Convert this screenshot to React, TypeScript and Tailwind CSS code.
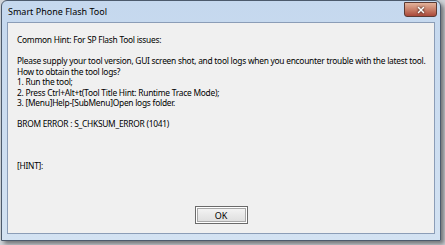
import { X } from "lucide-react";

const lines = [
  "Common Hint: For SP Flash Tool issues:",
  "",
  "Please supply your tool version, GUI screen shot, and tool logs when you encounter trouble with the latest tool.",
  "How to obtain the tool logs?",
  "1. Run the tool;",
  "2. Press Ctrl+Alt+t(Tool Title Hint: Runtime Trace Mode);",
  "3. [Menu]Help-[SubMenu]Open logs folder.",
  "",
  "BROM ERROR : S_CHKSUM_ERROR (1041)",
  "",
  "",
  "",
  "[HINT]:",
];

export default function App() {
  return (
    <div className="w-[445px] h-[245px] bg-[#cfd3d8] overflow-hidden font-['Noto_Sans','Open_Sans',sans-serif]">
      {/* WINDOW */}
      <div className="ml-px w-[440px] h-[241px] flex flex-col rounded-t-[6px] border border-[#4c5a6c] bg-gradient-to-b from-[#c5d8ee] to-[#d3e2f2] shadow-[3px_3px_4px_rgba(0,0,0,0.45)]">
        {/* TITLE BAR */}
        <div className="h-[21px] flex items-start justify-between pl-[6px] pr-[3px]">
          <span className="mt-[5px] text-[9px] leading-[11px] text-black">Smart Phone Flash Tool</span>
          <button className="mt-px w-[33px] h-[15px] flex items-center justify-center rounded-b-[3px] border border-[#5b3a33] bg-gradient-to-b from-[#e3b39b] via-[#c9806a] to-[#a9483a]">
            <X size={10} strokeWidth={3.5} className="text-white drop-shadow-[0_0_1px_rgba(0,0,0,0.9)]" />
          </button>
        </div>

        {/* CLIENT */}
        <div className="flex-1 mx-[5px] mb-[6px] border border-[#8b9db7] bg-[#f0f0f0] flex flex-col">
          <div className="pl-[9px] pt-[12px] text-[8.4px] leading-[10.5px] tracking-[-0.25px] text-black">
            {lines.map((l, i) => (
              <div key={i} className="h-[10.5px] whitespace-nowrap">
                {l}
              </div>
            ))}
          </div>

          <div className="flex-1 flex items-end justify-center pb-[9px]">
            <button className="w-[53px] h-[18px] border border-[#6a6a6a] bg-gradient-to-b from-[#f6f6f6] to-[#dcdcdc] shadow-[inset_0_0_0_1px_#ffffff,inset_0_0_0_2px_#a8a8a8] text-[9px] leading-none text-black">
              OK
            </button>
          </div>
        </div>
      </div>
    </div>
  );
}
